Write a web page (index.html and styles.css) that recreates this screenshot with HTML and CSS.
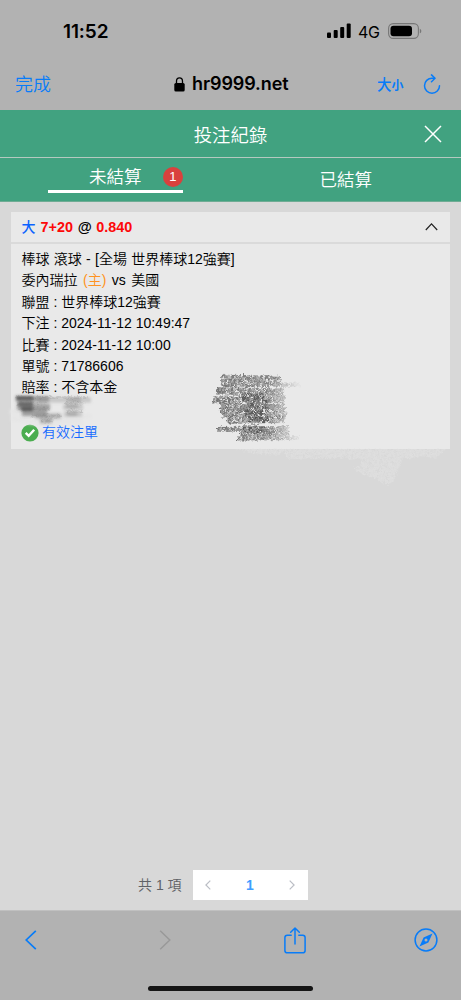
FILE: index.html
```html
<!DOCTYPE html>
<html lang="zh-Hant">
<head>
<meta charset="utf-8">
<meta name="viewport" content="width=device-width, initial-scale=1">
<title>投注紀錄</title>
<link rel="stylesheet" href="styles.css">
</head>
<body>
<div class="screen">
  <header class="status">
    <span class="clock">11:52</span>
    <div class="status-icons">
      <svg class="signal" width="24" height="16" viewBox="0 0 24 16"><rect x="0" y="9.5" width="4" height="5.5" rx="1"/><rect x="6.7" y="7" width="4" height="8" rx="1"/><rect x="13.2" y="4" width="4" height="11" rx="1"/><rect x="19.7" y="0.5" width="4" height="14.5" rx="1"/></svg>
      <span class="network">4G</span>
      <svg class="battery" width="34" height="16" viewBox="0 0 34 16"><rect x="0.6" y="0.6" width="29.8" height="14.8" rx="4.6" fill="none" stroke="#777" stroke-width="1.1"/><rect x="2.5" y="2.7" width="21.5" height="10.6" rx="3"/><path d="M31.8 5.7c2 .8 2 3.8 0 4.6z" fill="#777"/></svg>
    </div>
  </header>
  <nav class="address">
    <span class="done">完成</span>
    <div class="host">
      <svg width="11" height="15" viewBox="0 0 11 15"><rect x="0.3" y="6" width="10.4" height="8.5" rx="1.6"/><path d="M2.5 7V4.2a3 3.4 0 0 1 6 0V7" fill="none" stroke="#000" stroke-width="1.3"/></svg>
      <span>hr9999.net</span>
    </div>
    <div class="text-size"><span class="big">大</span><span class="small">小</span></div>
    <svg class="reload" width="18" height="20" viewBox="0 0 18 20" fill="none" stroke="#087cf8" stroke-width="1.5" stroke-linecap="round" stroke-linejoin="round"><path d="M11.5 4.2H9a7.5 7.5 0 1 0 7.5 7.5"/><path d="M8.5 .9 12 4.2 8.5 7.7"/></svg>
  </nav>
  <section class="title-bar">
    <h1>投注紀錄</h1>
    <svg class="close" width="18" height="18" viewBox="0 0 18 18"><path d="M1 1 17 17M17 1 1 17" stroke="#fff" stroke-width="1.5"/></svg>
  </section>
  <section class="tabs">
    <div class="tab tab-active"><div class="tab-label">未結算<span class="badge">1</span></div></div>
    <div class="tab">已結算</div>
  </section>
  <main class="content">
    <article class="card">
      <div class="card-head">
        <div class="bet"><span class="pick">大</span> <b class="odds">7+20</b> <b>@</b> <b class="odds">0.840</b></div>
        <svg width="13" height="9" viewBox="0 0 13 9"><path d="M.8 8 6.5 1.8 12.2 8" fill="none" stroke="#222" stroke-width="1.2"/></svg>
      </div>
      <div class="card-body">
        <p class="match">棒球 滾球 - [全場 世界棒球12強賽]</p>
        <p class="teams">委內瑞拉 <span class="home">(主)</span> vs 美國</p>
        <p>聯盟 : 世界棒球12強賽</p>
        <p>下注 : 2024-11-12 10:49:47</p>
        <p>比賽 : 2024-11-12 10:00</p>
        <p>單號 : 71786606</p>
        <p>賠率 : 不含本金</p>
        <div class="valid">
          <svg width="18" height="18" viewBox="0 0 18 18"><circle cx="9" cy="9" r="8.6" fill="#4bad50"/><path d="m4.7 8.8 3 3 5.5-6" fill="none" stroke="#fff" stroke-width="2.4"/></svg>
          <span>有效注單</span>
        </div>
      </div>
      <svg class="scribble" width="461" height="160" viewBox="0 350 461 160" fill="none">
        <defs>
          <filter id="pencil" filterUnits="userSpaceOnUse" x="0" y="350" width="461" height="160" color-interpolation-filters="sRGB">
            <feTurbulence type="fractalNoise" baseFrequency=".35 .4" numOctaves="3" seed="7" result="grain"/>
            <feColorMatrix in="grain" type="matrix" values="0 0 0 0 0  0 0 0 0 0  0 0 0 0 0  3 0 0 0 -.8" result="mask"/>
            <feComposite in="SourceGraphic" in2="mask" operator="in" result="rough"/>
            <feDisplacementMap in="rough" in2="grain" scale="5" xChannelSelector="R" yChannelSelector="G" result="edge"/>
            <feGaussianBlur in="edge" stdDeviation=".5"/>
          </filter>
          <filter id="smear" filterUnits="userSpaceOnUse" x="0" y="380" width="130" height="60"><feGaussianBlur stdDeviation="1.4"/></filter>
          <linearGradient id="fade" gradientUnits="userSpaceOnUse" x1="212" y1="0" x2="302" y2="0"><stop offset="0" stop-color="#555" stop-opacity=".8"/><stop offset=".65" stop-color="#555" stop-opacity=".7"/><stop offset=".84" stop-color="#777" stop-opacity=".4"/><stop offset="1" stop-color="#999" stop-opacity="0"/></linearGradient>
        </defs>
        <g fill="#e4e4e4" opacity=".55" filter="url(#pencil)">
          <path d="M235 449h50l-5 6-30-2zM284 449h100l-6 8-90 2zM340 449h106l-10 9-16-2-8 3-20-3-6 7-14 1-3 5-9-1 2-10-13 2-2-5z"/>
          <path d="M367 449h40l-14 33-6 3-10-6-14-4-10-8 16-1z"/>
        </g>
        <g filter="url(#pencil)" stroke="url(#fade)">
          <path d="M221 376.2l60 1" stroke-width="3"/>
          <path d="M221 381l60-.8" stroke-width="5"/>
          <path d="M220 385.5l80-1" stroke-width="4"/>
          <path d="M216 391l68 1" stroke-width="7"/>
          <path d="M213 400l72-1" stroke-width="7"/>
          <path d="M220 407l65 1" stroke-width="8"/>
          <path d="M221 414l66 1" stroke-width="7"/>
          <path d="M226 421l58-1" stroke-width="6"/>
          <path d="M217 429.5l72-1" stroke-width="5"/>
          <path d="M240 434l49-1" stroke-width="5"/>
          <path d="M237 438.5l62-.5" stroke-width="4"/>
        </g>
        <g filter="url(#pencil)" stroke="#333" opacity=".45">
          <path d="M242 397h22M247 404h21M243 411h21M248 418h20M243 429h22" stroke-width="8"/>
        </g>
        <path d="M10 411l30 7 52-2M11 418l20 4h52" stroke="#e6e6e6" stroke-width="5" filter="url(#smear)"/>
        <g filter="url(#smear)">
          <path d="M16 399h33M17 407h33M22 413h25" stroke="#555" stroke-width="6" opacity=".5"/>
          <path d="M16 398h17M18 404h15M21 409h12" stroke="#222" stroke-width="4" opacity=".6"/>
          <path d="M35 416h26M40 421h12" stroke="#888" stroke-width="5" opacity=".55"/>
          <path d="M37 400h54M63 407h20M64 414h18" stroke="#888" stroke-width="5" opacity=".35"/>
          <path d="M67 400h14M66 406h12M67 414h10" stroke="#777" stroke-width="4" opacity=".38"/>
        </g>
        <g filter="url(#pencil)" stroke="#666" opacity=".2">
          <path d="M16 397.5h73M17 403h30M65 403h20M18 409h32M66 411h17M30 416h31M41 421h13" stroke-width="3"/>
        </g>
      </svg>
    </article>
    <div class="pager">
      <span class="total">共 1 項</span>
      <div class="pages">
        <svg width="6" height="10" viewBox="0 0 6 10"><path d="M5.3.6.9 5l4.4 4.4" fill="none" stroke="#bbbec5" stroke-width="1.2"/></svg>
        <b>1</b>
        <svg width="6" height="10" viewBox="0 0 6 10"><path d="M.7.6 5.1 5 .7 9.4" fill="none" stroke="#bbbec5" stroke-width="1.2"/></svg>
      </div>
    </div>
  </main>
  <footer class="toolbar">
    <div class="tools">
      <svg width="12" height="20" viewBox="0 0 12 20"><path d="M10.8.8 1.2 10l9.6 9.2" fill="none" stroke="#087cf8" stroke-width="1.7"/></svg>
      <svg width="12" height="20" viewBox="0 0 12 20"><path d="M1.2.8 10.8 10 1.2 19.2" fill="none" stroke="#999" stroke-width="1.5"/></svg>
      <svg width="22" height="27" viewBox="0 0 22 27" fill="none" stroke="#087cf8" stroke-width="1.5" stroke-linecap="round" stroke-linejoin="round"><path d="M7.2 8.2H3.3a2.4 2.4 0 0 0-2.4 2.4v12.8a2.4 2.4 0 0 0 2.4 2.4h15.4a2.4 2.4 0 0 0 2.4-2.4V10.6a2.4 2.4 0 0 0-2.4-2.4h-3.9M11 17V1.2M6.7 5.2 11 1l4.3 4.2"/></svg>
      <svg width="24" height="24" viewBox="0 0 24 24"><circle cx="12" cy="12" r="10.9" fill="none" stroke="#087cf8" stroke-width="1.5"/><path fill="#087cf8" fill-rule="evenodd" d="M18.5 5.5 14.4 14.4 5.5 18.5 9.6 9.6zM12 10.5a1.5 1.5 0 1 0 0 3 1.5 1.5 0 0 0 0-3z"/></svg>
    </div>
    <div class="home-bar"></div>
  </footer>
</div>
</body>
</html>
```
FILE: styles.css
```css
* { box-sizing: border-box; }
body { margin: 0; }
p, h1 { margin: 0; }
svg { display: block; flex: none; }
.screen {
  width: 461px;
  height: 1000px;
  display: flex;
  flex-direction: column;
  overflow: hidden;
  background: #b2b2b2;
  color: #000;
  font-family: "Liberation Sans", "Noto Sans CJK TC", sans-serif;
}
.status {
  height: 62px;
  padding: 0 39px 0 63px;
  display: flex;
  align-items: center;
  justify-content: space-between;
  font-family: Inter, sans-serif;
}
.clock { font-size: 19px; font-weight: 600; letter-spacing: -0.1px; }
.status-icons { display: flex; align-items: center; }
.network { width: 22px; margin: 2px 8px 0 7px; font-size: 16px; letter-spacing: -0.3px; }
.address {
  height: 48px;
  padding: 0 20px 4px 15px;
  display: flex;
  align-items: center;
  color: #087cf8;
}
.done { width: 159px; padding-bottom: 2px; font: 350 18px/26px "Noto Sans CJK TC", sans-serif; }
.host {
  width: 203px;
  display: flex;
  align-items: center;
  gap: 7px;
  color: #000;
  font: 600 18px/24px Inter, sans-serif;
  letter-spacing: -0.1px;
}
.text-size { width: 46px; font-family: "Noto Sans CJK TC", sans-serif; font-weight: 500; line-height: 24px; white-space: nowrap; }
.big { font-size: 14.5px; }
.small { font-size: 12px; font-weight: 700; }
.title-bar {
  height: 48px;
  padding: 0 19px 0 37px;
  display: flex;
  align-items: center;
  background: #41a280;
  border-bottom: 1px solid #b5c9c0;
  color: #fff;
}
.title-bar h1 { flex: 1; text-align: center; font: 350 18.4px/24px "Noto Sans CJK TC", sans-serif; }
.tabs {
  height: 44px;
  display: flex;
  background: #41a280;
  color: #fff;
  border-bottom: 1px solid #6fac94;
  font: 350 17.5px/24px "Noto Sans CJK TC", sans-serif;
}
.tab { width: 50%; display: flex; justify-content: center; padding-top: 9px; }
.tab-active { padding-top: 0; }
.tab-label {
  position: relative;
  width: 135px;
  height: 35px;
  padding-top: 6px;
  text-align: center;
  border-bottom: 3px solid #fff;
}
.badge {
  position: absolute;
  right: 0;
  top: 9px;
  width: 20px;
  height: 20px;
  border-radius: 50%;
  background: #d9413d;
  font: 13px/20px "Liberation Sans", sans-serif;
}
.content {
  height: 709px;
  padding: 10px 11px 10px;
  display: flex;
  flex-direction: column;
  justify-content: space-between;
  background: #d8d8d8;
  border-bottom: 1px solid #c0c0c0;
}
.card { position: relative; height: 237px; background: #e9e9e9; }
.card-head {
  height: 32px;
  padding: 0 12px 2px 10.5px;
  display: flex;
  align-items: center;
  justify-content: space-between;
  border-bottom: 2px solid #dadada;
  font-size: 14.4px;
}
.bet { word-spacing: 0.6px; }
.pick { margin-right: 0.5px; color: #0b63ff; font-weight: 500; font-size: 14px; }
.odds { color: #fd0808; }
.card-body { padding: 5px 10.5px 0; font-size: 14px; font-weight: 350; line-height: 21.4px; }
.card-body p { height: 21.4px; white-space: nowrap; }
.match { word-spacing: 0.4px; }
.teams { word-spacing: 1.6px; }
.home { color: #ff9322; }
.valid { height: 22px; margin-top: 23px; display: flex; align-items: center; gap: 3px; color: #176cff; }
.valid svg { margin-left: -0.5px; }
.scribble { position: absolute; left: -11px; top: 138px; pointer-events: none; }
.pager { height: 30px; margin-left: 127px; display: flex; align-items: center; }
.total { width: 55px; padding-bottom: 2px; font-size: 14px; font-weight: 350; color: #606266; white-space: nowrap; }
.pages {
  width: 115px;
  height: 30px;
  padding: 0 13px 0 12px;
  display: flex;
  align-items: center;
  justify-content: space-between;
  background: #fff;
  color: #409eff;
  font-size: 14px;
}
.toolbar { height: 89px; }
.tools {
  height: 58px;
  padding-left: 25px;
  display: grid;
  grid-template-columns: 134px 125px 130px 24px;
  align-items: center;
}
.home-bar { width: 165px; height: 5px; margin: 17px auto 0; border-radius: 3px; background: #151515; }
```
